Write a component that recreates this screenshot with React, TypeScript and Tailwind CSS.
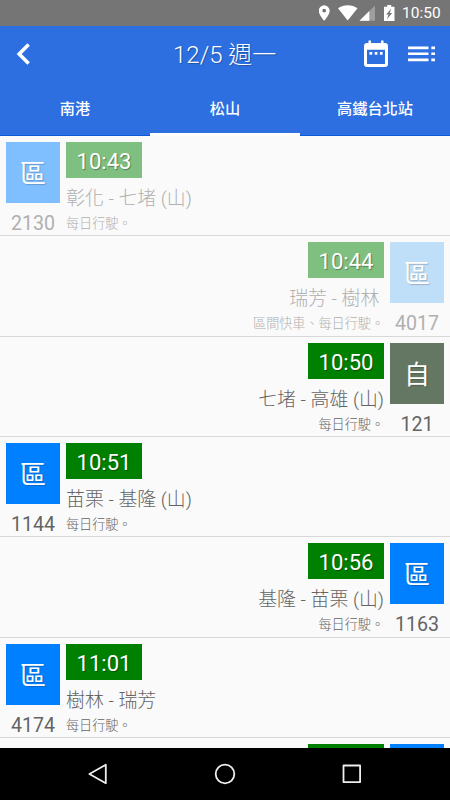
type Train = {
  time: string
  route: string
  note: string
  no: string
  kind: string
  color: string
  right?: boolean
  passed?: boolean
}

const trains: Train[] = [
  { time: '10:43', route: '彰化 - 七堵 (山)', note: '每日行駛。', no: '2130', kind: '區', color: 'bg-[#7fbeff]', passed: true },
  { time: '10:44', route: '瑞芳 - 樹林\u00a0', note: '區間快車、每日行駛。', no: '4017', kind: '區', color: 'bg-[#bfdef8]', right: true, passed: true },
  { time: '10:50', route: '七堵 - 高雄 (山)', note: '每日行駛。', no: '121', kind: '自', color: 'bg-[#637762]', right: true },
  { time: '10:51', route: '苗栗 - 基隆 (山)', note: '每日行駛。', no: '1144', kind: '區', color: 'bg-[#0080ff]' },
  { time: '10:56', route: '基隆 - 苗栗 (山)', note: '每日行駛。', no: '1163', kind: '區', color: 'bg-[#0080ff]', right: true },
  { time: '11:01', route: '樹林 - 瑞芳', note: '每日行駛。', no: '4174', kind: '區', color: 'bg-[#0080ff]' },
]

const tabs = ['南港', '松山', '高鐵台北站']

function StatusBar() {
  return (
    <div className="flex h-[26px] shrink-0 items-center justify-end bg-[#757575] pr-[8px] text-white">
      <svg width="76" height="26" viewBox="0 0 76 26" fill="currentColor">
        <path fillRule="evenodd" d="M5.200 5.300A5.500 5.500 0 0 1 10.700 10.700c0 3.900-5.500 10.100-5.500 10.100S-.3 14.600-.3 10.700a5.500 5.500 0 0 1 5.500-5.400Zm0 3.400a1.900 1.900 0 1 0 0 3.800 1.900 1.900 0 0 0 0-3.800Z" />
        <path d="M19 8.200c5.600-4 14-4 19.500 0L28.700 20.600Z" />
        <path d="M56 5.400V20.800H40.500Z" opacity=".3" />
        <path d="M50.300 11V20.800H40.500Z" />
        <path fillRule="evenodd" d="M68.200 5h4v1.800h3.300V21H65V6.800h3.200ZM72.200 8.600 67.200 14.600h2.300l-1.600 4.600 5.300-6.200h-2.500Z" />
      </svg>
      <span className="ml-[7px] w-[40px] text-[15.500px] leading-[27px]">10:50</span>
    </div>
  )
}

function Header() {
  return (
    <header className="h-[110px] shrink-0 border-b border-[#0b5bd6] bg-[#2d6fe0] text-white">
      <div className="flex h-[56px] items-center">
        <svg className="ml-[14px]" width="20" height="24" viewBox="0 0 20 24" fill="none" stroke="currentColor" strokeWidth="3.600">
          <path d="M14.600 2.600 5.200 12l9.400 9.400" />
        </svg>
        <h1 className="ml-[139px] w-[191px] whitespace-nowrap pt-px text-[24px] font-light leading-[56px] [text-shadow:1px_1px_1px_#0004]">
          12/5 週一
        </h1>
        <svg width="24" height="28" viewBox="0 0 24 28" fill="currentColor">
          <path fillRule="evenodd" d="M4.500.5h2.400V3h10.200V.5h2.400V3H21a3 3 0 0 1 3 3v18a3 3 0 0 1-3 3H3a3 3 0 0 1-3-3V6a3 3 0 0 1 3-3h1.500ZM3 9.800V24h18V9.800Z" />
          <path d="M5.500 12h2.700v2.700H5.500zM10.700 12h2.700v2.700h-2.700zM15.900 12h2.700v2.700h-2.700z" />
        </svg>
        <svg className="ml-[20px]" width="27" height="16" viewBox="0 0 27 16" fill="currentColor">
          <path d="M0 .5h20.500v2.700H0zM0 6.400h20.500v2.700H0zM0 12.500h20.500v2.700H0zM23.300.5H27v2.700h-3.700zM23.300 6.400H27v2.700h-3.700zM23.300 12.500H27v2.700h-3.700z" />
        </svg>
      </div>
      <nav className="flex h-[54px]">
        {tabs.map((tab, i) => (
          <div
            key={tab}
            className={`flex-1 border-b-[3px] text-center text-[15.200px] font-medium leading-[54px] ${i === 1 ? 'border-white' : 'border-transparent'}`}
          >
            {tab}
          </div>
        ))}
      </nav>
    </header>
  )
}

function TrainRow({ train }: { train: Train }) {
  const side = train.right ? 'flex-row-reverse text-right' : 'flex-row'
  return (
    <li className={`flex h-[100.350px] shrink-0 gap-[6px] border-b border-[#d8d8d8] px-[6px] pt-[6px] ${side} ${train.passed ? 'text-[#b0b0b0]' : 'text-[#646464]'}`}>
      <div className="w-[54px] text-center">
        <div className={`h-[61px] pt-[3px] text-[26px] leading-[58px] text-white [text-shadow:1px_1px_1px_#0003] ${train.color}`}>
          {train.kind}
        </div>
        <div className="text-[19.600px] leading-[41px]">{train.no}</div>
      </div>
      <div className={`flex flex-col ${train.right ? 'items-end' : 'items-start'}`}>
        <div className={`h-[36px] w-[76px] pt-px text-center text-[22px] leading-[38px] text-white [text-shadow:1px_1px_1px_#0005] ${train.passed ? 'bg-[#7fbf7f]' : 'bg-[#008000]'}`}>
          {train.time}
        </div>
        <div className="h-[35px] whitespace-nowrap text-[18.900px] font-light leading-[41px]">{train.route}</div>
        <div className="whitespace-nowrap text-[13.100px] font-light leading-[21px]">{train.note}</div>
      </div>
    </li>
  )
}

function NavBar() {
  return (
    <div className="flex h-[52px] shrink-0 items-center justify-center gap-[105px] bg-black">
      <svg width="22" height="22" viewBox="0 0 22 22" fill="none" stroke="#eee" strokeWidth="1.800" strokeLinejoin="round">
        <path d="M18.800 1.800v18.400L2.400 11Z" />
      </svg>
      <svg width="22" height="22" viewBox="0 0 22 22" fill="none" stroke="#eee" strokeWidth="1.800">
        <circle cx="11" cy="11" r="9.300" />
      </svg>
      <svg width="22" height="22" viewBox="0 0 22 22" fill="none" stroke="#eee" strokeWidth="1.800" strokeLinejoin="round">
        <path d="M2.500 2.500h16.600v16.600H2.500Z" />
      </svg>
    </div>
  )
}

export default function App() {
  return (
    <div
      lang="zh-Hant"
      className="flex h-[800px] w-[450px] flex-col overflow-hidden bg-[#fafafa] font-[Roboto,'Noto_Sans_CJK_TC',sans-serif]"
    >
      <StatusBar />
      <Header />
      <ul className="flex min-h-0 flex-1 flex-col overflow-hidden">
        {trains.map((train) => (
          <TrainRow key={train.no} train={train} />
        ))}
        {/* top edge of the next row */}
        <li className="flex shrink-0 justify-end gap-[6px] px-[6px] pt-[6px]">
          <div className="h-[36px] w-[76px] bg-[#008000]" />
          <div className="h-[61px] w-[54px] bg-[#0080ff]" />
        </li>
      </ul>
      <NavBar />
    </div>
  )
}
